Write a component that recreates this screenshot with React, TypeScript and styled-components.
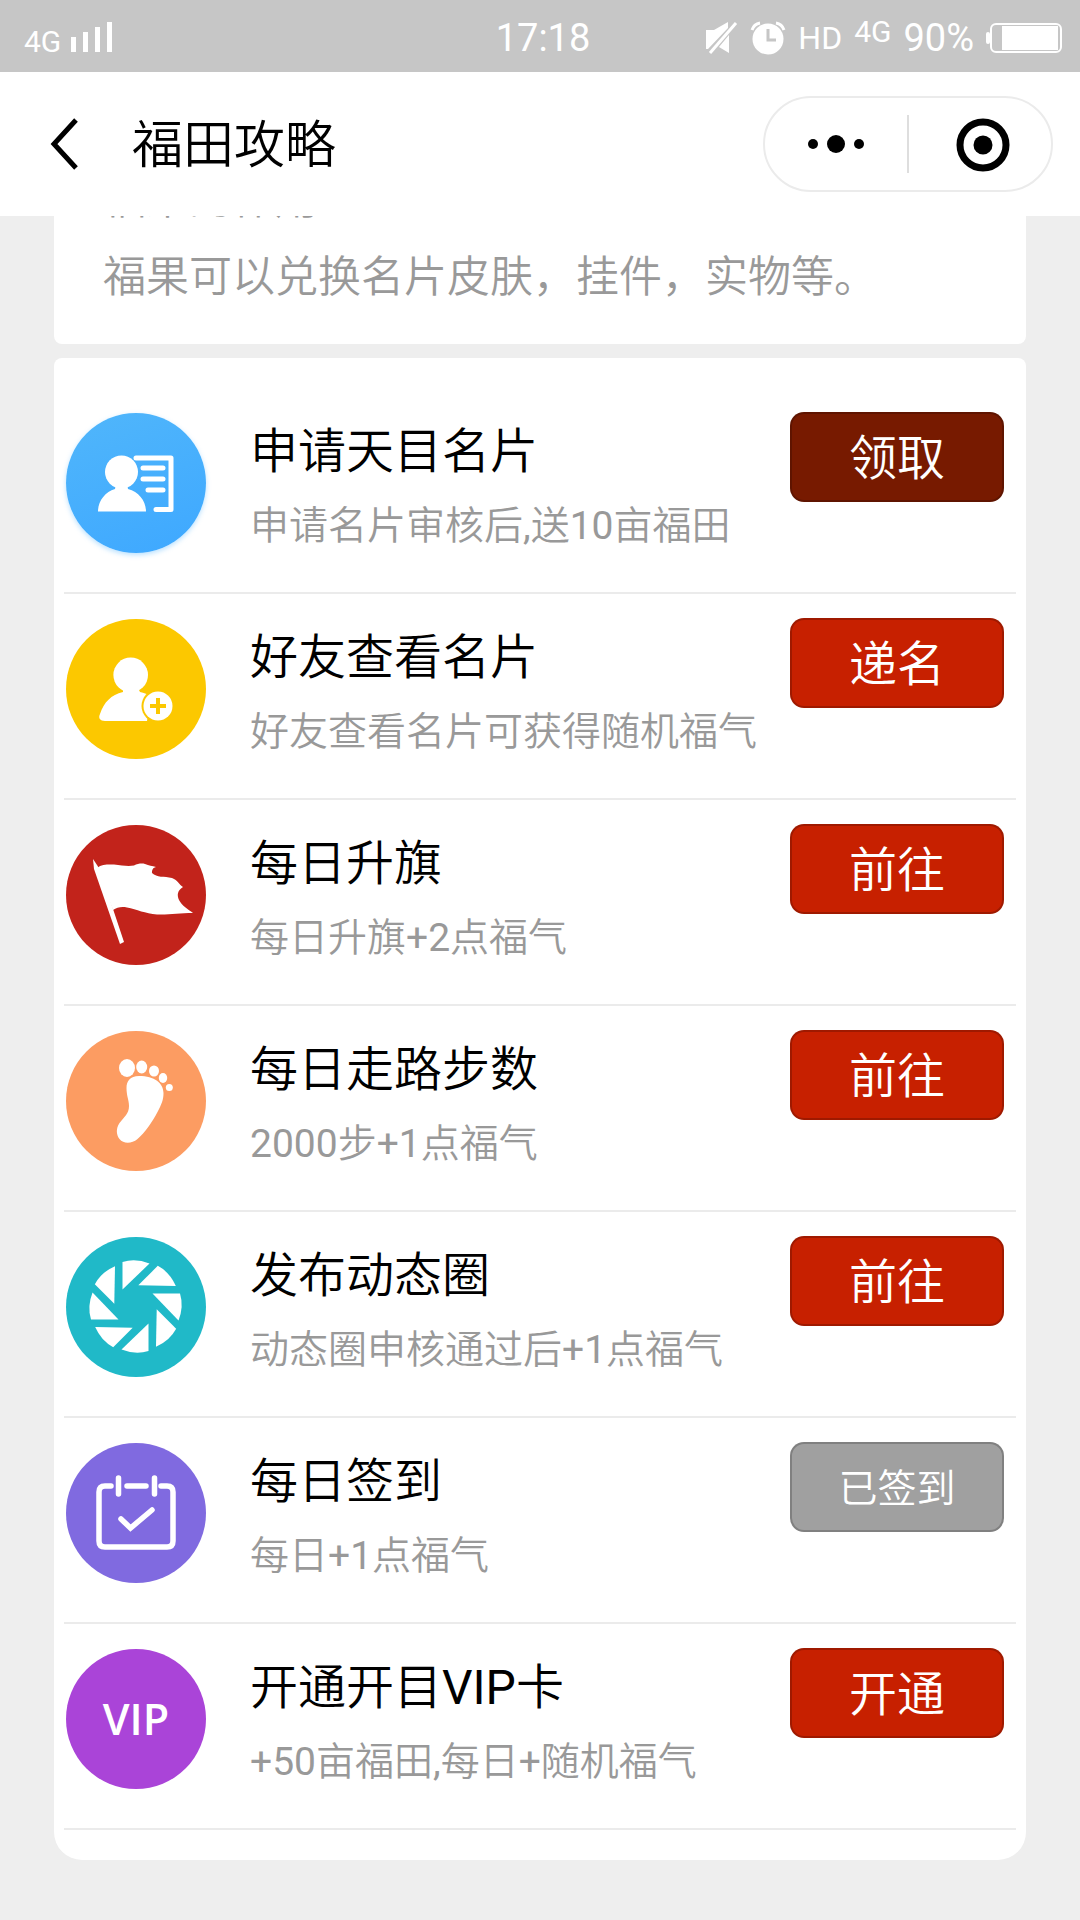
import React from "react";
import styled, { createGlobalStyle } from "styled-components";

const GlobalStyle = createGlobalStyle`
  * {
    box-sizing: border-box;
  }
  body {
    margin: 0;
    background: #eeeeee;
    color: #000000;
    font-family: Roboto, "Noto Sans CJK SC DemiLight", "Noto Sans CJK SC", sans-serif;
  }
  h1, h2, p, ul {
    margin: 0;
    padding: 0;
    font-weight: 400;
  }
  button {
    font-family: inherit;
    cursor: pointer;
  }
`;

const Page = styled.div`
  min-height: 100vh;
  padding-bottom: 60px;
`;

/* ---------- status bar ---------- */

const StatusBar = styled.div`
  display: grid;
  grid-template-columns: 1fr auto 1fr;
  align-items: center;
  height: 72px;
  padding: 4px 18px 0 24px;
  background: #c6c6c6;
  color: #ffffff;
`;

const StatusStart = styled.div`
  display: flex;
  align-items: baseline;
  gap: 10px;
  padding-top: 8px;
`;

const StatusEnd = styled.div`
  display: flex;
  align-items: center;
  justify-content: flex-end;
  gap: 12px;
`;

const StatusText = styled.span<{ $size: number; $raised?: boolean }>`
  font-size: ${(p) => p.$size}px;
  line-height: 40px;
  padding-bottom: ${(p) => (p.$raised ? 12 : 0)}px;
`;

/* ---------- title bar ---------- */

const TitleBar = styled.header`
  display: flex;
  align-items: center;
  height: 144px;
  padding: 0 27px 0 44px;
  background: #ffffff;
`;

const IconButton = styled.button`
  display: flex;
  align-items: center;
  justify-content: center;
  padding: 0;
  border: 0;
  background: none;
`;

const BackButton = styled(IconButton)`
  width: 40px;
  height: 80px;
  margin-right: 48px;
`;

const Title = styled.h1`
  flex: 1;
  padding-top: 4px;
  font-size: 51px;
  line-height: 72px;
`;

const Capsule = styled.div`
  display: grid;
  grid-template-columns: 1fr 2px 1fr;
  align-items: center;
  width: 290px;
  height: 96px;
  border: 2px solid #ebebeb;
  border-radius: 48px;
`;

const CapsuleButton = styled(IconButton)`
  height: 92px;

  &:last-child {
    padding-left: 6px;
  }
`;

const CapsuleDivider = styled.span`
  height: 58px;
  background: #dedede;
`;

/* ---------- content ---------- */

const Content = styled.main`
  display: flex;
  flex-direction: column;
  gap: 14px;
  padding: 0 54px;
  overflow: hidden;
`;

const IntroCard = styled.section`
  margin-top: -55px;
  padding: 0 49px 29px;
  border-radius: 8px;
  background: #ffffff;
  color: #999999;
  font-size: 43px;
  line-height: 76px;
`;

const IntroHeading = styled.h2`
  font-size: inherit;
`;

const IntroText = styled.p`
  padding-top: 2px;
`;

const TaskCard = styled.ul`
  padding: 30px 10px;
  border-radius: 8px 8px 28px 28px;
  background: #ffffff;
  list-style: none;
`;

const TaskRow = styled.li`
  display: flex;
  align-items: flex-start;
  padding: 24px 12px 30px 2px;
  border-bottom: 2px solid #ebebeb;
`;

const Badge = styled.div<{ $color: string; $glow?: boolean }>`
  display: flex;
  flex: none;
  align-items: center;
  justify-content: center;
  width: 140px;
  height: 140px;
  margin-top: 1px;
  margin-right: 44px;
  border-radius: 50%;
  background: ${(p) => p.$color};
  box-shadow: ${(p) => (p.$glow ? "0 2px 5px rgba(80, 180, 255, 0.4)" : "none")};
`;

const BadgeText = styled.span`
  color: #ffffff;
  font-family: "Open Sans", sans-serif;
  font-size: 43px;
  font-weight: 600;
  line-height: 60px;
`;

const TaskText = styled.div`
  flex: 1;
  min-width: 0;
  padding-top: 2px;
  white-space: nowrap;
`;

const TaskTitle = styled.h2`
  font-size: 48px;
  line-height: 76px;
`;

const TaskNote = styled.p`
  color: #999999;
  font-size: 39px;
  line-height: 72px;
`;

type Tone = "normal" | "pressed" | "done";

const toneColors: Record<Tone, string> = {
  normal: "#c72000",
  pressed: "#771a00",
  done: "#a0a0a0",
};

const ActionButton = styled.button<{ $tone: Tone }>`
  flex: none;
  width: 214px;
  height: 90px;
  padding: 4px 0 0;
  border: 2px solid rgba(0, 0, 0, 0.2);
  border-radius: 14px;
  background: ${(p) => toneColors[p.$tone]};
  color: #ffffff;
  font-size: ${(p) => (p.$tone === "done" ? 39 : 48)}px;
  line-height: 72px;
`;

/* ---------- drawings ---------- */

const SignalIcon = () => (
  <svg width="42" height="30" viewBox="0 0 42 30" fill="#fff" aria-hidden="true">
    <rect x="0" y="15" width="5" height="15" />
    <rect x="12" y="10" width="5" height="20" />
    <rect x="24" y="5" width="5" height="25" />
    <rect x="36" y="0" width="5" height="30" />
  </svg>
);

const MuteIcon = () => (
  <svg width="32" height="34" viewBox="0 0 32 34" aria-hidden="true">
    <path d="M0 9h8L22 1v6L2 28H0zM23 14v18l-10-6z" fill="#fff" />
    <path d="M30 2L4 32" stroke="#fff" strokeWidth="3" />
  </svg>
);

const AlarmIcon = () => (
  <svg width="36" height="34" viewBox="0 0 36 34" aria-hidden="true">
    <circle cx="18" cy="18" r="15.5" fill="#fff" />
    <path d="M2 9Q4 3 10 2M34 9Q32 3 26 2" stroke="#fff" strokeWidth="3" fill="none" />
    <path d="M18 8v11h8" stroke="#c6c6c6" strokeWidth="3" fill="none" />
  </svg>
);

const BatteryIcon = () => (
  <svg width="76" height="32" viewBox="0 0 76 32" aria-hidden="true">
    <rect x="0" y="10" width="4" height="12" rx="2" fill="#fff" />
    <rect x="5" y="2" width="70" height="28" rx="5" fill="none" stroke="#fff" strokeWidth="2" />
    <rect x="16" y="4" width="56" height="24" fill="#fff" />
  </svg>
);

const BackIcon = () => (
  <svg width="30" height="54" viewBox="0 0 30 54" aria-hidden="true">
    <path d="M27 3L5 27l22 24" fill="none" stroke="#000" strokeWidth="5" />
  </svg>
);

const MoreIcon = () => (
  <svg width="58" height="20" viewBox="0 0 58 20" aria-hidden="true">
    <circle cx="6" cy="10" r="5" />
    <circle cx="29" cy="10" r="9" />
    <circle cx="52" cy="10" r="5" />
  </svg>
);

const TargetIcon = () => (
  <svg width="54" height="56" viewBox="0 0 54 56" aria-hidden="true">
    <circle cx="27" cy="29" r="23" fill="none" stroke="#000" strokeWidth="7" />
    <circle cx="27" cy="29" r="9.5" />
  </svg>
);

const Drawing = ({ children }: { children: React.ReactNode }) => (
  <svg width="140" height="140" viewBox="0 0 140 140" fill="#fff" aria-hidden="true">
    {children}
  </svg>
);

const CardDrawing = () => (
  <Drawing>
    <circle cx="55.5" cy="59" r="16.5" />
    <path d="M50 71h11l1 5c11 3 18 12 18 22.500H32c0-10.500 7-19.500 17-22.500z" />
    <path
      d="M70 45h35v51.600H90M77 55h20M77 66h20M82 77h15"
      fill="none"
      stroke="#fff"
      strokeWidth="5"
      strokeLinejoin="round"
      strokeLinecap="round"
    />
  </Drawing>
);

const FriendDrawing = () => (
  <Drawing>
    <ellipse cx="64.700" cy="56" rx="17.300" ry="17.500" />
    <path d="M57 69h15l2 4c4 1 8 2 11 4l-4 25H39c-5 0-7-3-5-7 4-12 11-19 23-22z" />
    <circle cx="92" cy="87" r="16.500" fill="#fcc800" />
    <circle cx="92" cy="87" r="14.500" />
    <path d="M92 79v16M84 87h16" stroke="#fcc800" strokeWidth="4" />
  </Drawing>
);

const FlagDrawing = () => (
  <Drawing>
    <path d="M27 34l4 6 3 5 24 72-4 2L28 44z" />
    <path d="M31 43c5-4 11-3.500 17-3.500 8 1 14 2 20 1 4-2 8-2.500 11-1.500 4 2 7 1.500 11 3-4 1-4 4-4 6 5 5 12 3 20 5 6 2 7 7 11 9-6 4-6 8-4 13 3 6 9 9 14 13-14 0-24 2-36 1.500-12-1-20-5-30-7-6-1-10 0-14 2.500z" />
  </Drawing>
);

const FootDrawing = () => (
  <Drawing>
    <ellipse cx="61" cy="37" rx="8" ry="9" />
    <ellipse cx="75.700" cy="36" rx="5.500" ry="6.500" />
    <ellipse cx="88" cy="40" rx="5" ry="5.500" />
    <ellipse cx="97" cy="47" rx="4.200" ry="5" />
    <circle cx="103.300" cy="56.500" r="3.500" />
    <path d="M73 45c-9 0-12.500 5-12.500 12 0 8 2.500 12 2.500 18 0 8-5 11-9.500 17-4 6-3 12 0 16 4 5 12 5 18 0 7-6 15-17 20-27 4-8 6-12 6-19 0-10-9-17-24.500-17z" />
  </Drawing>
);

const bladeAngles = [0, 45, 90, 135, 180, 225, 270, 315];

const ShutterDrawing = () => (
  <Drawing>
    <g transform="translate(69.500 69.500)">
      {bladeAngles.map((angle) => (
        <path key={angle} d="M-13-44.500Q0-48.500 14-43L-13-17z" transform={`rotate(${angle})`} />
      ))}
    </g>
  </Drawing>
);

const CalendarDrawing = () => (
  <Drawing>
    <path
      d="M45 43h-6q-6 0-6 6v49q0 6 6 6h62q6 0 6-6V49q0-6-6-6h-6M61 43h19M52.500 35v16M88.500 35v16M55 76l9.500 9L86 67"
      fill="none"
      stroke="#fff"
      strokeWidth="5.500"
      strokeLinecap="round"
    />
  </Drawing>
);

/* ---------- data ---------- */

interface Task {
  title: string;
  note: string;
  action: string;
  tone: Tone;
  color: string;
  glow?: boolean;
  drawing: React.ReactNode;
}

const tasks: Task[] = [
  {
    title: "申请天目名片",
    note: "申请名片审核后,送10亩福田",
    action: "领取",
    tone: "pressed",
    color: "linear-gradient(160deg, #50b6fb, #3ea8ff)",
    glow: true,
    drawing: <CardDrawing />,
  },
  {
    title: "好友查看名片",
    note: "好友查看名片可获得随机福气",
    action: "递名",
    tone: "normal",
    color: "#fcc800",
    drawing: <FriendDrawing />,
  },
  {
    title: "每日升旗",
    note: "每日升旗+2点福气",
    action: "前往",
    tone: "normal",
    color: "#c2231b",
    drawing: <FlagDrawing />,
  },
  {
    title: "每日走路步数",
    note: "2000步+1点福气",
    action: "前往",
    tone: "normal",
    color: "#fc9c62",
    drawing: <FootDrawing />,
  },
  {
    title: "发布动态圈",
    note: "动态圈申核通过后+1点福气",
    action: "前往",
    tone: "normal",
    color: "#20b9c8",
    drawing: <ShutterDrawing />,
  },
  {
    title: "每日签到",
    note: "每日+1点福气",
    action: "已签到",
    tone: "done",
    color: "#806ae0",
    drawing: <CalendarDrawing />,
  },
  {
    title: "开通开目VIP卡",
    note: "+50亩福田,每日+随机福气",
    action: "开通",
    tone: "normal",
    color: "#aa44d8",
    drawing: <BadgeText>VIP</BadgeText>,
  },
];

export default function App() {
  return (
    <Page lang="zh-CN">
      <GlobalStyle />
      <StatusBar>
        <StatusStart>
          <StatusText $size={30}>4G</StatusText>
          <SignalIcon />
        </StatusStart>
        <StatusText $size={38}>17:18</StatusText>
        <StatusEnd>
          <MuteIcon />
          <AlarmIcon />
          <StatusText $size={32}>HD</StatusText>
          <StatusText $size={30} $raised>
            4G
          </StatusText>
          <StatusText $size={38}>90%</StatusText>
          <BatteryIcon />
        </StatusEnd>
      </StatusBar>
      <TitleBar>
        <BackButton type="button" aria-label="返回">
          <BackIcon />
        </BackButton>
        <Title>福田攻略</Title>
        <Capsule>
          <CapsuleButton type="button" aria-label="更多">
            <MoreIcon />
          </CapsuleButton>
          <CapsuleDivider />
          <CapsuleButton type="button" aria-label="关闭">
            <TargetIcon />
          </CapsuleButton>
        </Capsule>
      </TitleBar>
      <Content>
        <IntroCard>
          <IntroHeading>福果的作用</IntroHeading>
          <IntroText>福果可以兑换名片皮肤，挂件，实物等。</IntroText>
        </IntroCard>
        <TaskCard>
          {tasks.map((task) => (
            <TaskRow key={task.title}>
              <Badge $color={task.color} $glow={task.glow}>
                {task.drawing}
              </Badge>
              <TaskText>
                <TaskTitle>{task.title}</TaskTitle>
                <TaskNote>{task.note}</TaskNote>
              </TaskText>
              <ActionButton type="button" $tone={task.tone}>
                {task.action}
              </ActionButton>
            </TaskRow>
          ))}
        </TaskCard>
      </Content>
    </Page>
  );
}
